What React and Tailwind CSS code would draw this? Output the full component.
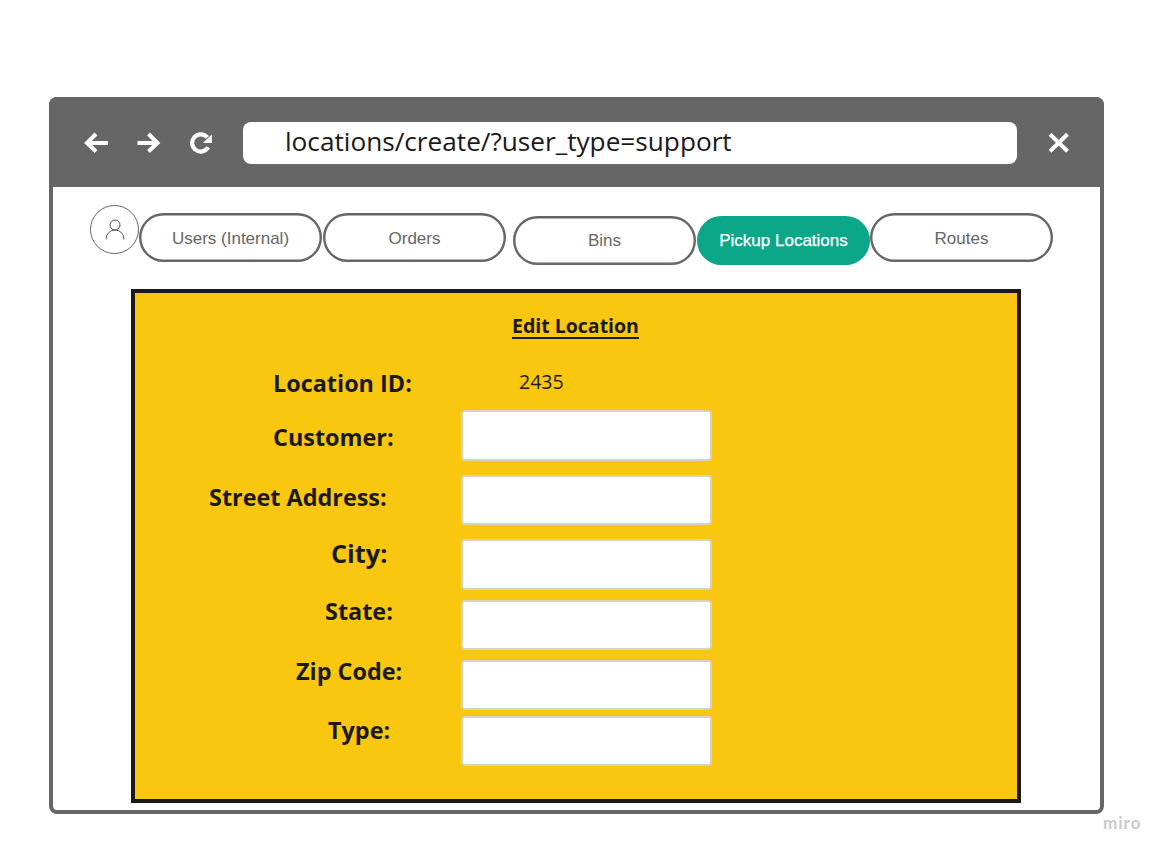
const tabs = [
  { label: "Users (Internal)", box: "w-[183px] pt-[2px] mt-[-2px]" },
  { label: "Orders", box: "w-[183px] pt-[2px] ml-px mt-[-2px]" },
  { label: "Bins", box: "w-[183px] ml-[7px] mt-px" },
  { label: "Pickup Locations", active: true, box: "w-[173px] ml-px mt-px" },
  { label: "Routes", box: "w-[183px] pt-[2px] mt-[-2px]" },
];

const labels = [
  { text: "Location ID:", box: "pl-[138px] text-[23.4px]" },
  { text: "Customer:", box: "mt-[22px] pl-[138px] text-[23.4px]" },
  { text: "Street Address:", box: "mt-[28px] pl-[74px] text-[23.4px]" },
  { text: "City:", box: "mt-[24px] pl-[196px] text-[25.3px]" },
  { text: "State:", box: "mt-[26px] pl-[190px] text-[23.4px]" },
  { text: "Zip Code:", box: "mt-[28px] pl-[161px] text-[23.4px]" },
  { text: "Type:", box: "mt-[27px] pl-[193px] text-[23.4px]" },
];

const fields = [
  { name: "customer", box: "mt-[15px] h-[51px]" },
  { name: "street", box: "mt-[14px] h-[50px]" },
  { name: "city", box: "mt-[14px] h-[51px]" },
  { name: "state", box: "mt-[10px] h-[50px]" },
  { name: "zip", box: "mt-[10px] h-[50px]" },
  { name: "type", box: "mt-[6px] h-[50px]" },
];

function Tab({ label, active, box }) {
  const tone = active
    ? "bg-[#0ca789] text-white [-webkit-text-stroke:0.25px_white]"
    : "bg-white text-[#666] shadow-[inset_0_0_0_2.4px_#666]";
  return (
    <button
      className={`flex h-[49px] shrink-0 items-center justify-center whitespace-nowrap rounded-full text-[17px] ${tone} ${box}`}
    >
      {label}
    </button>
  );
}

function Toolbar() {
  return (
    <header className="flex h-[90px] items-start bg-[#666] pl-[35px] pt-[25px]">
      <svg className="mt-[8px] h-6 w-[25px]" viewBox="0 0 25 24" fill="none" stroke="#fff" strokeWidth="4">
        <path d="M24 13H3M12 4L3 13L12 21.5" />
      </svg>
      <svg className="ml-[28px] mt-[8px] h-6 w-[24px]" viewBox="0 0 24 24" fill="none" stroke="#fff" strokeWidth="4">
        <path d="M0.5 13H20M11.5 4L20.5 13L11.5 21.5" />
      </svg>
      <svg className="ml-[28px] mt-[8px] h-6 w-[24px]" viewBox="0 0 24 24">
        <path d="M19.2 17.3A8.6 8.6 0 1 1 18.3 7.4" fill="none" stroke="#fff" strokeWidth="4.2" />
        <path d="M22.8 4.6V13H13.8Z" fill="#fff" />
      </svg>
      <div className="ml-[30px] h-[42px] w-[774px] rounded-[8px] bg-white pl-[42px] font-['Open_Sans',sans-serif] text-[26.2px] leading-[39px] text-[#1a1a1a]">
        locations/create/?user_type=support
      </div>
      <svg className="ml-[30px] mt-[8px] h-6 w-6" viewBox="0 0 24 24" fill="none" stroke="#fff" strokeWidth="4">
        <path d="M3 4.3L20.5 21.3M20.5 4.3L3 21.3" />
      </svg>
    </header>
  );
}

export default function App() {
  return (
    <div className="flex h-[856px] w-[1167px] flex-col bg-white pl-[49px] pt-[97px] font-['Liberation_Sans',Arial,sans-serif]">
      <main className="h-[717px] w-[1055px] shrink-0 overflow-hidden rounded-[8px] bg-[#666]">
        <Toolbar />
        <div className="ml-[4px] h-[623px] w-[1047px] rounded-b-[4px] bg-white">
          <nav className="flex h-[102px] items-start pl-[37px] pt-[28px]">
            <div className="mt-[-10px] flex size-[49px] shrink-0 items-center justify-center rounded-full border border-[#666]">
              <svg className="size-[24px]" viewBox="0 0 24 24" fill="none" stroke="#555" strokeWidth="1">
                <circle cx="12" cy="7" r="5" />
                <path d="M3.2 21.5V20.5A8.7 8.4 0 0 1 20.8 20.5V21.5" />
              </svg>
            </div>
            {tabs.map((tab) => (
              <Tab key={tab.label} {...tab} />
            ))}
          </nav>
          <section className="ml-[78px] h-[514px] w-[890px] border-4 border-[#1a1a1a] bg-[#fac710] font-['Open_Sans',sans-serif] text-[#1a1a1a]">
            <h1 className="ml-[377px] h-[73px] pt-[18px] text-[19.5px] font-bold leading-[30px] underline decoration-2 underline-offset-[4px]">
              Edit Location
            </h1>
            <div className="flex">
              <div className="w-[326px] pt-px font-bold">
                {labels.map(({ text, box }) => (
                  <div key={text} className={`h-[32px] whitespace-nowrap leading-[32px] ${box}`}>
                    {text}
                  </div>
                ))}
              </div>
              <div className="w-[251px]">
                <div className="h-[29px] pl-[58px] text-[19.5px] leading-[32px]">2435</div>
                {fields.map(({ name, box }) => (
                  <input
                    key={name}
                    aria-label={name}
                    className={`block w-[251px] rounded-[4px] border-2 border-[#d8d2c0] bg-white px-3 text-lg outline-none ${box}`}
                  />
                ))}
              </div>
            </div>
          </section>
        </div>
      </main>
      <div className="ml-[1054px] mt-[-1px] h-[20px] font-['Lato',sans-serif] text-[17px] font-bold leading-[20px] tracking-[1px] text-[#c9c8d3]">
        miro
      </div>
    </div>
  );
}
